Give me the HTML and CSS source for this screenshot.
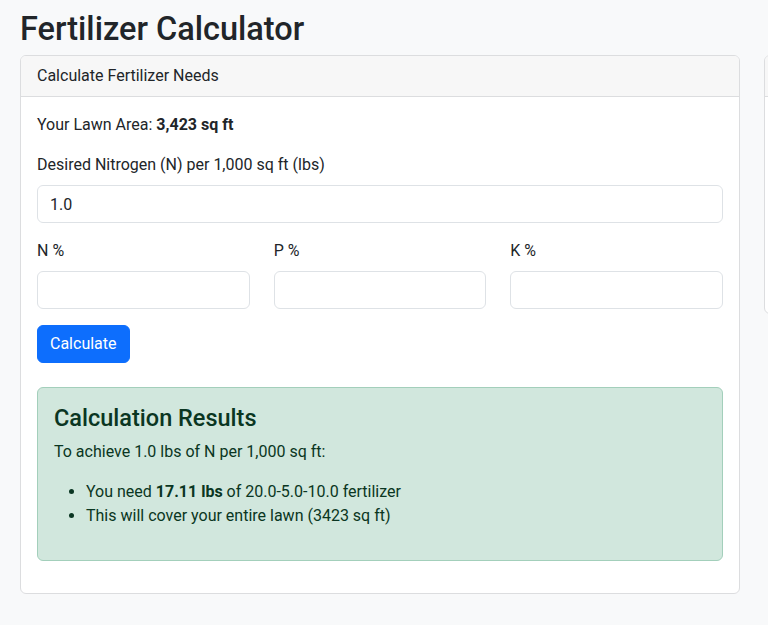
FILE: index.html
```html
<!DOCTYPE html>
<html lang="en">
<head>
<meta charset="utf-8">
<title>Fertilizer Calculator</title>
<link rel="stylesheet" href="styles.css">
</head>
<body>
<div class="page">
  <h1 class="title">Fertilizer Calculator</h1>
  <div class="row">
    <div class="col-main">
      <div class="card">
        <div class="card-header">Calculate Fertilizer Needs</div>
        <div class="card-body">
          <p class="area">Your Lawn Area: <strong>3,423 sq ft</strong></p>
          <div class="field">
            <label class="label">Desired Nitrogen (N) per 1,000 sq ft (lbs)</label>
            <input class="input" type="text" value="1.0">
          </div>
          <div class="grid3">
            <div class="field">
              <label class="label">N %</label>
              <input class="input" type="text">
            </div>
            <div class="field">
              <label class="label">P %</label>
              <input class="input" type="text">
            </div>
            <div class="field">
              <label class="label">K %</label>
              <input class="input" type="text">
            </div>
          </div>
          <button class="btn" type="button">Calculate</button>
          <div class="alert">
            <h4 class="alert-heading">Calculation Results</h4>
            <p class="alert-text">To achieve 1.0 lbs of N per 1,000 sq ft:</p>
            <ul class="alert-list">
              <li>You need <strong>17.11 lbs</strong> of 20.0-5.0-10.0 fertilizer</li>
              <li>This will cover your entire lawn (3423 sq ft)</li>
            </ul>
          </div>
        </div>
      </div>
    </div>
    <div class="col-side">
      <div class="card">
        <div class="card-header side-header"></div>
        <div class="card-body side-body"></div>
      </div>
    </div>
  </div>
</div>
</body>
</html>
```

FILE: styles.css
```css
html, body {
  overflow: hidden;
}
body {
  margin: 0;
  background: #f8f9fa;
  color: #212529;
  font-family: Roboto, "Noto Sans", sans-serif;
  font-size: 16px;
  line-height: 1.5;
}
.page {
  padding: 0 20px;
  width: 1200px;
}
.title {
  margin: 0 0 6px;
  padding-top: 10px;
  font-size: 32.5px;
  font-weight: 500;
  line-height: 1.2;
  white-space: nowrap;
}
.row {
  display: flex;
  gap: 24px;
  align-items: flex-start;
}
.col-main {
  flex: 0 0 720px;
  min-width: 0;
}
.col-side {
  flex: 0 0 340px;
}
.card {
  box-sizing: border-box;
  background: #fff;
  border: 1px solid #dcdddf;
  border-radius: 6px;
  overflow: hidden;
}
.card-header {
  background: #f7f7f7;
  border-bottom: 1px solid #dcdddf;
  padding: 8px 16px;
}
.side-header {
  height: 24px;
}
.card-body {
  padding: 16px;
}
.side-body {
  height: 184px;
}
.area {
  margin: 0 0 16px;
}
.field {
  display: flex;
  flex-direction: column;
  margin-bottom: 16px;
  min-width: 0;
}
.label {
  margin-bottom: 8px;
}
.input {
  box-sizing: border-box;
  width: 100%;
  min-width: 0;
  height: 38px;
  padding: 6px 12px;
  border: 1px solid #dee2e6;
  border-radius: 6px;
  font: inherit;
  color: #212529;
  background: #fff;
}
.grid3 {
  display: grid;
  grid-template-columns: repeat(3, minmax(0, 1fr));
  column-gap: 24px;
}
.btn {
  display: block;
  height: 38px;
  padding: 6px 12px;
  border: 1px solid #0d6efd;
  border-radius: 6px;
  background: #0d6efd;
  color: #fff;
  font: inherit;
}
.alert {
  margin: 24px 0 16px;
  padding: 16px;
  background: #d1e7dd;
  border: 1px solid #a3cfbb;
  border-radius: 6px;
  color: #0a3622;
}
.alert-heading {
  margin: 0 0 8px;
  font-size: 23.5px;
  font-weight: 500;
  line-height: 28px;
}
.alert-text {
  margin: 0 0 16px;
}
.alert-list {
  margin: 0 0 16px;
  padding-left: 32px;
}
```
